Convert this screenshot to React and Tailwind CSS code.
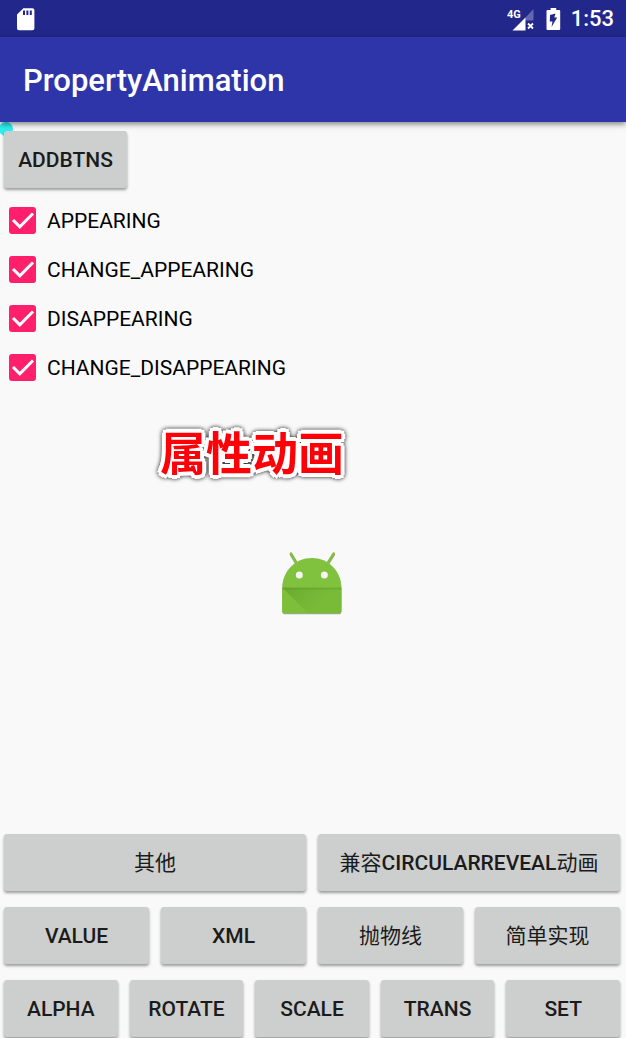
const BUTTON =
  "h-[57px] min-w-0 cursor-pointer rounded-[3px] bg-[#cdcfce] px-3 text-center font-medium text-[#1b1b1b] shadow-[0_2px_3px_rgba(0,0,0,0.38)] active:bg-[#bfc1c0]";

const OPTIONS = ["APPEARING", "CHANGE_APPEARING", "DISAPPEARING", "CHANGE_DISAPPEARING"];

function Cjk({ children }) {
  return <span className="font-normal">{children}</span>;
}

function StatusBar() {
  return (
    <header className="flex h-[37px] items-center justify-between bg-[#22278c] pr-3 pl-4 text-white">
      <svg className="h-6 w-5" viewBox="0 0 20 24" aria-label="SD card">
        <path
          fill="currentColor"
          fillRule="evenodd"
          d="M7.4 1.200h9a2 2 0 0 1 2 2v18a2 2 0 0 1-2 2H3a2 2 0 0 1-2-2V7.600zM7 3.400v4.600h2V3.400zM10.400 3.400v4.600h2V3.400zM13.800 3.400v4.600h2V3.400z"
        />
      </svg>
      <div className="flex items-center">
        <svg className="h-6 w-7" viewBox="0 0 28 24" aria-label="4G signal">
          <path fill="#6367ae" d="M26.500 2v11.500h-8v-3z" />
          <path fill="currentColor" d="M18.500 10.500v13H5.500z" />
          <path stroke="currentColor" strokeWidth="1.800" d="m21 16.500 5 5m0-5-5 5" />
          <text x="0" y="11" fill="currentColor" className="font-['Roboto',sans-serif] text-[11px] font-bold">
            4G
          </text>
        </svg>
        <svg className="ml-[11px] h-6 w-4" viewBox="0 0 16 24" aria-label="Battery charging">
          <path
            fill="currentColor"
            fillRule="evenodd"
            d="M4.600 1h5.600v2h3a1 1 0 0 1 1 1v18a1 1 0 0 1-1 1H1.500a1 1 0 0 1-1-1V4a1 1 0 0 1 1-1h3.100zM9.500 6.500 4 8l-.2 6.500h2.700L5.500 20l5.700-9.500H8.300z"
          />
        </svg>
        <time className="ml-[9px] text-[22px] leading-6 font-medium">1:53</time>
      </div>
    </header>
  );
}

function Option({ label }) {
  return (
    <label className="flex h-[49px] cursor-pointer items-center gap-[11px]">
      <span className="grid size-[27px]">
        <input
          type="checkbox"
          defaultChecked
          className="peer col-start-1 row-start-1 size-[27px] appearance-none rounded-[3px] border-2 border-[#757575] checked:border-0 checked:bg-[#ff1f6b]"
        />
        <svg
          viewBox="0 0 27 27"
          className="pointer-events-none invisible col-start-1 row-start-1 size-[27px] peer-checked:visible"
          fill="none"
          stroke="#fff"
          strokeWidth="3"
          aria-hidden="true"
        >
          <path d="m4 13 6.800 6.800L24 6.500" />
        </svg>
      </span>
      {label}
    </label>
  );
}

function AndroidIcon() {
  return (
    <svg className="mx-auto h-[68px] w-16" viewBox="45 30 192 204" role="img" aria-label="Android">
      <defs>
        <linearGradient id="fold" x1="60" y1="150" x2="130" y2="220" gradientUnits="userSpaceOnUse">
          <stop offset="0" stopColor="#5a9a2a" stopOpacity="0.5" />
          <stop offset="1" stopColor="#5a9a2a" stopOpacity="0.12" />
        </linearGradient>
        <linearGradient id="crease" x1="0" y1="143" x2="0" y2="151" gradientUnits="userSpaceOnUse">
          <stop offset="0" stopColor="#558f28" stopOpacity="0.5" />
          <stop offset="1" stopColor="#558f28" stopOpacity="0" />
        </linearGradient>
      </defs>
      <g className="drop-shadow-[0_3px_2px_rgba(0,0,0,0.35)]">
        <path d="m78 41 16 27M206 41l-17 27" stroke="#7fbf3b" strokeWidth="8" strokeLinecap="round" />
        <path d="M52 143C52 94 91 54 140.500 54S229 94 229 143v69a8 8 0 0 1-8 8H60a8 8 0 0 1-8-8z" fill="#80c13d" />
      </g>
      <path d="M52 143h177v69a8 8 0 0 1-8 8H60a8 8 0 0 1-8-8z" fill="#7dbf39" />
      <path d="M52 143h177v69a8 8 0 0 1-8 8h-92z" fill="url(#fold)" />
      <path d="M52 143h177v8H52z" fill="url(#crease)" />
      <circle cx="103" cy="105" r="10.500" fill="#f5f5f5" />
      <circle cx="178" cy="105" r="10.500" fill="#f5f5f5" />
    </svg>
  );
}

export default function App() {
  return (
    <div className="flex min-h-screen flex-col bg-[#f9f9f9] font-['Roboto','Noto_Sans_CJK_SC',sans-serif] text-[21px] leading-7 text-black">
      <StatusBar />
      <div className="z-10 flex h-[85px] items-center bg-[#2e35a9] px-[23px] shadow-[0_2px_6px_rgba(0,0,0,0.5)]">
        <h1 className="pt-[2px] text-[31px] leading-9 font-medium text-white">PropertyAnimation</h1>
      </div>

      <main className="relative flex grow flex-col pt-[9px] pr-[6px] pb-px pl-1">
        <span className="absolute top-0 -left-px size-[14px] rounded-full bg-[#2ceff0]" />
        <button type="button" className={`${BUTTON} relative w-[123px] self-start`}>
          ADDBTNS
        </button>

        <fieldset className="mt-2 pl-[5px]">
          {OPTIONS.map((label) => (
            <Option key={label} label={label} />
          ))}
        </fieldset>

        <h2 className="mt-[31px] pl-[156px] text-[46px] leading-[62px] font-bold text-[#ff0008] drop-shadow-[0_0_2px_rgba(0,0,0,0.9)] [text-shadow:4px_0_#fff,-4px_0_#fff,0_4px_#fff,0_-4px_#fff,3px_3px_#fff,-3px_3px_#fff,3px_-3px_#fff,-3px_-3px_#fff,2px_0_#fff,-2px_0_#fff,0_2px_#fff,0_-2px_#fff]">
          属性动画
        </h2>

        <div className="grow pt-[65px]">
          <AndroidIcon />
        </div>

        <div className="flex flex-col gap-4">
          <div className="grid grid-cols-2 gap-3">
            <button type="button" className={BUTTON}>
              <Cjk>其他</Cjk>
            </button>
            <button type="button" className={BUTTON}>
              <Cjk>兼容</Cjk>CIRCULARREVEAL<Cjk>动画</Cjk>
            </button>
          </div>
          <div className="grid grid-cols-4 gap-3">
            <button type="button" className={BUTTON}>VALUE</button>
            <button type="button" className={BUTTON}>XML</button>
            <button type="button" className={BUTTON}>
              <Cjk>抛物线</Cjk>
            </button>
            <button type="button" className={BUTTON}>
              <Cjk>简单实现</Cjk>
            </button>
          </div>
          <div className="grid grid-cols-5 gap-3">
            {["ALPHA", "ROTATE", "SCALE", "TRANS", "SET"].map((name) => (
              <button key={name} type="button" className={BUTTON}>
                {name}
              </button>
            ))}
          </div>
        </div>
      </main>
    </div>
  );
}
